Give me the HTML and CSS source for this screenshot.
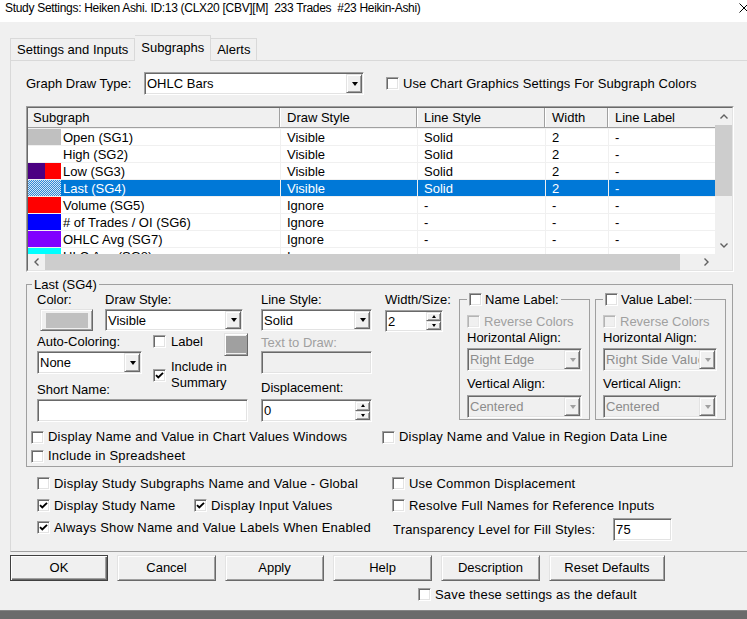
FILE: index.html
```html
<!DOCTYPE html>
<html lang="en">
<head>
    <meta charset="UTF-8">
    <title>Study Settings</title>
    <link rel="stylesheet" href="styles.css">
</head>
<body>
    <div class="titlebar">
        <span class="title">Study Settings: Heiken Ashi. ID:13 (CLX20 [CBV][M]&nbsp; 233 Trades&nbsp; #23 Heikin-Ashi)</span>
        <svg class="close" width="10" height="10" viewBox="0 0 10 10"><path d="M0.5 0.5L9.5 9.5M9.5 0.5L0.5 9.5" stroke="#000" stroke-width="1"/></svg>
    </div>

    <div class="tabs">
        <div class="tab first">Settings and Inputs</div>
        <div class="tab active">Subgraphs</div>
        <div class="tab">Alerts</div>
    </div>

    <div class="panel">
        <div class="draw-type">
            <span class="dt-label">Graph Draw Type:</span>
            <div class="field combo dt-combo"><span class="val">OHLC Bars</span><span class="raised drop"></span></div>
            <div class="check dt-check"><span class="box"></span>Use Chart Graphics Settings For Subgraph Colors</div>
        </div>

        <!-- subgraph list -->
        <div class="grid">
            <div class="grid-inner">
                <div class="grid-view">
                    <div class="row head">
                        <div class="cell">Subgraph</div>
                        <div class="cell">Draw Style</div>
                        <div class="cell">Line Style</div>
                        <div class="cell">Width</div>
                        <div class="cell">Line Label</div>
                    </div>
                    <div class="row">
                        <div class="cell name"><span class="sw sw-gray"></span>Open (SG1)</div>
                        <div class="cell">Visible</div><div class="cell">Solid</div><div class="cell">2</div><div class="cell">-</div>
                    </div>
                    <div class="row">
                        <div class="cell name"><span class="sw"></span>High (SG2)</div>
                        <div class="cell">Visible</div><div class="cell">Solid</div><div class="cell">2</div><div class="cell">-</div>
                    </div>
                    <div class="row">
                        <div class="cell name"><span class="sw sw-low"></span>Low (SG3)</div>
                        <div class="cell">Visible</div><div class="cell">Solid</div><div class="cell">2</div><div class="cell">-</div>
                    </div>
                    <div class="row selected">
                        <div class="cell name"><span class="sw sw-sel"></span>Last (SG4)</div>
                        <div class="cell">Visible</div><div class="cell">Solid</div><div class="cell">2</div><div class="cell">-</div>
                    </div>
                    <div class="row">
                        <div class="cell name"><span class="sw sw-red"></span>Volume (SG5)</div>
                        <div class="cell">Ignore</div><div class="cell">-</div><div class="cell">-</div><div class="cell">-</div>
                    </div>
                    <div class="row">
                        <div class="cell name"><span class="sw sw-blue"></span># of Trades / OI (SG6)</div>
                        <div class="cell">Ignore</div><div class="cell">-</div><div class="cell">-</div><div class="cell">-</div>
                    </div>
                    <div class="row">
                        <div class="cell name"><span class="sw sw-violet"></span>OHLC Avg (SG7)</div>
                        <div class="cell">Ignore</div><div class="cell">-</div><div class="cell">-</div><div class="cell">-</div>
                    </div>
                    <div class="row">
                        <div class="cell name"><span class="sw sw-cyan"></span>HLC Avg (SG8)</div>
                        <div class="cell">Ignore</div><div class="cell">-</div><div class="cell">-</div><div class="cell">-</div>
                    </div>
                </div>
                <div class="vscroll">
                    <span class="arrow"><svg width="8" height="5" viewBox="0 0 8 5"><path d="M0.5 4.5L4 1L7.5 4.5" fill="none" stroke="#606060" stroke-width="1.4"/></svg></span>
                    <span class="thumb"></span>
                    <span class="track"></span>
                    <span class="arrow"><svg width="8" height="5" viewBox="0 0 8 5"><path d="M0.5 0.5L4 4L7.5 0.5" fill="none" stroke="#606060" stroke-width="1.4"/></svg></span>
                </div>
                <div class="hscroll">
                    <span class="arrow"><svg width="5" height="8" viewBox="0 0 5 8"><path d="M4.5 0.5L1 4L4.5 7.5" fill="none" stroke="#606060" stroke-width="1.4"/></svg></span>
                    <span class="thumb"></span>
                    <span class="track"></span>
                    <span class="arrow"><svg width="5" height="8" viewBox="0 0 5 8"><path d="M0.5 0.5L4 4L0.5 7.5" fill="none" stroke="#606060" stroke-width="1.4"/></svg></span>
                </div>
                <div class="corner"></div>
            </div>
        </div>

        <!-- selected subgraph -->
        <fieldset class="group">
            <legend>Last (SG4)</legend>
            <div class="g-main">
                <div class="c-left">
                    <div class="lbl-row"><span class="l-color">Color:</span><span>Draw Style:</span></div>
                    <div class="ctl-row">
                        <div class="raised colorbtn"><span class="fill"></span></div>
                        <div class="field combo ds-combo"><span class="val">Visible</span><span class="raised drop"></span></div>
                    </div>
                    <div class="mid-row">
                        <div class="ac">
                            <div class="lbl">Auto-Coloring:</div>
                            <div class="field combo ac-combo"><span class="val">None</span><span class="raised drop"></span></div>
                            <div class="lbl short-lbl">Short Name:</div>
                        </div>
                        <div class="lbl-col">
                            <div class="check gap5"><span class="box"></span>Label</div>
                            <div class="check gap5 summary"><span class="box"><svg width="9" height="9" viewBox="0 0 9 9"><path d="M1 4.2L3.3 6.5L8 1.8" fill="none" stroke="#000" stroke-width="1.9"/></svg></span>Include in<br>Summary</div>
                        </div>
                        <div class="raised lblcolor"><span class="fill"></span></div>
                    </div>
                    <div class="field short-in"></div>
                </div>

                <div class="c-mid">
                    <div class="lbl">Line Style:</div>
                    <div class="field combo ls-combo"><span class="val">Solid</span><span class="raised drop"></span></div>
                    <div class="lbl dis td-lbl">Text to Draw:</div>
                    <div class="field off td-in"></div>
                    <div class="lbl disp-lbl">Displacement:</div>
                    <div class="field spin disp-in"><span class="val">0</span><span class="spin-btns"><span class="raised up"></span><span class="raised down"></span></span></div>
                </div>

                <div class="c-width">
                    <div class="lbl">Width/Size:</div>
                    <div class="field spin w-in"><span class="val">2</span><span class="spin-btns"><span class="raised up"></span><span class="raised down"></span></span></div>
                </div>

                <fieldset class="sub name-grp">
                    <legend><span class="check gap3"><span class="box"></span>Name Label:</span></legend>
                    <div class="check dis rev"><span class="box off"></span>Reverse Colors</div>
                    <div class="lbl h-lbl">Horizontal Align:</div>
                    <div class="field combo off h-combo"><span class="val">Right Edge</span><span class="raised drop"></span></div>
                    <div class="lbl v-lbl">Vertical Align:</div>
                    <div class="field combo off v-combo"><span class="val">Centered</span><span class="raised drop"></span></div>
                </fieldset>

                <fieldset class="sub value-grp">
                    <legend><span class="check gap3"><span class="box"></span>Value Label:</span></legend>
                    <div class="check dis rev"><span class="box off"></span>Reverse Colors</div>
                    <div class="lbl h-lbl">Horizontal Align:</div>
                    <div class="field combo off h-combo"><span class="val">Right Side Value</span><span class="raised drop"></span></div>
                    <div class="lbl v-lbl">Vertical Align:</div>
                    <div class="field combo off v-combo"><span class="val">Centered</span><span class="raised drop"></span></div>
                </fieldset>
            </div>

            <div class="g-row first-row">
                <div class="check chart-vals"><span class="box"></span>Display Name and Value in Chart Values Windows</div>
                <div class="check"><span class="box"></span>Display Name and Value in Region Data Line</div>
            </div>
            <div class="g-row">
                <div class="check"><span class="box"></span>Include in Spreadsheet</div>
            </div>
        </fieldset>

        <!-- global options -->
        <div class="opts">
            <div class="check"><span class="box"></span>Display Study Subgraphs Name and Value - Global</div>
            <div class="check"><span class="box"></span>Use Common Displacement</div>
            <div class="pair">
                <div class="check study-name"><span class="box"><svg width="9" height="9" viewBox="0 0 9 9"><path d="M1 4.2L3.3 6.5L8 1.8" fill="none" stroke="#000" stroke-width="1.9"/></svg></span>Display Study Name</div>
                <div class="check"><span class="box"><svg width="9" height="9" viewBox="0 0 9 9"><path d="M1 4.2L3.3 6.5L8 1.8" fill="none" stroke="#000" stroke-width="1.9"/></svg></span>Display Input Values</div>
            </div>
            <div class="check"><span class="box"></span>Resolve Full Names for Reference Inputs</div>
            <div class="check"><span class="box"><svg width="9" height="9" viewBox="0 0 9 9"><path d="M1 4.2L3.3 6.5L8 1.8" fill="none" stroke="#000" stroke-width="1.9"/></svg></span>Always Show Name and Value Labels When Enabled</div>
            <div class="transp">
                <span class="tr-lbl">Transparency Level for Fill Styles:</span>
                <div class="field tr-in"><span class="val">75</span></div>
            </div>
        </div>
    </div>

    <div class="buttons">
        <div class="btn default">OK</div>
        <div class="btn">Cancel</div>
        <div class="btn">Apply</div>
        <div class="btn">Help</div>
        <div class="btn">Description</div>
        <div class="btn wide">Reset Defaults</div>
    </div>

    <div class="save-row">
        <div class="check"><span class="box"></span>Save these settings as the default</div>
    </div>

    <div class="strip"></div>
</body>
</html>
```

FILE: styles.css
```css
* {
    box-sizing: border-box;
}

body {
    margin: 0;
    width: 747px;
    height: 619px;
    overflow: hidden;
    background: #f0f0f0;
    font-family: "Liberation Sans", Arial, sans-serif;
    font-size: 13px;
    line-height: 15px;
    color: #000;
    display: flex;
    flex-direction: column;
}

/* title bar */
.titlebar {
    height: 22px;
    flex-shrink: 0;
    background: #fff;
    display: flex;
    justify-content: space-between;
    padding-left: 5px;
    font-size: 12px;
    line-height: 16px;
    letter-spacing: -0.3px;
    overflow: hidden;
}

.close {
    margin-top: 3px;
    margin-right: -2px;
}

/* tabs */
.tabs {
    display: flex;
    align-items: flex-end;
    height: 25px;
    margin-top: 13px;
    padding-left: 10px;
    flex-shrink: 0;
}

.tab {
    height: 22px;
    padding: 0 6px;
    line-height: 21px;
    border-top: 1px solid #d9d9d9;
    border-right: 1px solid #d9d9d9;
    white-space: nowrap;
}

.tab.first {
    border-left: 1px solid #d9d9d9;
}

.tab.active {
    height: 26px;
    line-height: 23px;
    margin-bottom: -1px;
    background: #f0f0f0;
    position: relative;
    z-index: 1;
}

.panel {
    margin-left: 10px;
    margin-right: -10px;
    height: 492px;
    flex-shrink: 0;
    border: 1px solid #d9d9d9;
    border-bottom-color: #a0a0a0;
    padding: 11px 0 0 15px;
}

/* classic controls */
.field {
    background: #fff;
    border: 1px solid;
    border-color: #a0a0a0 #fff #fff #a0a0a0;
    padding: 1px;
    box-shadow: inset 1px 1px #696969, inset -1px -1px #e3e3e3;
}

.field.off {
    background: #f0f0f0;
    color: #8c8c8c;
}

.raised {
    background: #f0f0f0;
    border: 1px solid;
    border-color: #e3e3e3 #696969 #696969 #e3e3e3;
    box-shadow: inset 1px 1px #fff, inset -1px -1px #a0a0a0;
}

.combo, .spin {
    display: flex;
}

.combo .val, .spin .val, .tr-in .val {
    flex: 1;
    min-width: 0;
    padding-left: 1px;
    align-self: center;
    white-space: nowrap;
    overflow: hidden;
}

.drop {
    width: 16px;
    flex-shrink: 0;
    display: flex;
    align-items: center;
    justify-content: center;
}

.drop::after {
    content: "";
    border-top: 4px solid #000;
    border-left: 3.5px solid transparent;
    border-right: 3.5px solid transparent;
    margin-left: 1px;
}

.off .drop::after {
    border-top-color: #a0a0a0;
}

.spin-btns {
    width: 15px;
    display: flex;
    flex-direction: column;
}

.spin-btns .raised {
    flex: 1;
    display: flex;
    align-items: center;
    justify-content: center;
}

.spin-btns .up::after {
    content: "";
    border-bottom: 3px solid #000;
    border-left: 2.5px solid transparent;
    border-right: 2.5px solid transparent;
}

.spin-btns .down::after {
    content: "";
    border-top: 3px solid #000;
    border-left: 2.5px solid transparent;
    border-right: 2.5px solid transparent;
}

.check {
    display: flex;
    align-items: center;
    gap: 4px;
    white-space: nowrap;
}

.check.gap5 {
    gap: 5px;
}

.check.gap3 {
    gap: 3px;
}

.box {
    width: 13px;
    height: 13px;
    flex-shrink: 0;
    background: #fff;
    border: 1px solid;
    border-color: #a0a0a0 #fff #fff #a0a0a0;
    box-shadow: inset 1px 1px #696969, inset -1px -1px #e3e3e3;
    display: flex;
    align-items: center;
    justify-content: center;
}

.box.off {
    background: #f0f0f0;
    border-color: #c8c8c8 #fff #fff #c8c8c8;
    box-shadow: inset 1px 1px #b4b4b4, inset -1px -1px #e8e8e8;
}

.dis {
    color: #a0a0a0;
}

/* graph draw type */
.draw-type {
    display: flex;
    align-items: center;
    height: 23px;
}

.dt-label {
    width: 118px;
}

.dt-combo {
    width: 220px;
    height: 23px;
}

.dt-check {
    margin-left: 22px;
    letter-spacing: 0.1px;
}

/* subgraph list */
.grid {
    margin-top: 11px;
    width: 708px;
    height: 166px;
    border: 1px solid;
    border-color: #a0a0a0 #fff #fff #a0a0a0;
}

.grid-inner {
    height: 100%;
    border: 1px solid;
    border-color: #696969 #e3e3e3 #e3e3e3 #696969;
    display: grid;
    grid-template-columns: 1fr 17px;
    grid-template-rows: 146px 1fr;
}

.grid-view {
    overflow: hidden;
    background: #fff;
}

.row {
    display: grid;
    grid-template-columns: 252px 137px 128px 63px 120px;
    height: 17px;
    border-top: 1px solid #f0f0f0;
    line-height: 17px;
    white-space: nowrap;
}

.row .cell {
    padding-left: 6px;
    border-left: 1px solid #f0f0f0;
    overflow: hidden;
}

.row .cell.name {
    padding-left: 0;
    border-left: none;
    display: flex;
}

.row.head {
    height: 20px;
    border-top: none;
    border-bottom: 1px solid #a0a0a0;
    background: #f0f0f0;
    line-height: 20px;
}

.row.head .cell {
    padding-left: 6px;
    border-left: 1px solid #fff;
    border-right: 1px solid #a0a0a0;
}

.row.head .cell:first-child {
    padding-left: 5px;
    border-left: none;
}

.row.selected {
    background: #0078d7;
    color: #fff;
}

.sw {
    width: 33px;
    height: 16px;
    margin-right: 2px;
    flex-shrink: 0;
    background: #fff;
}

.sw-gray {
    background: #c0c0c0;
}

.sw-low {
    background: linear-gradient(90deg, #4b0082 0 17px, #ff0000 17px);
}

.sw-sel {
    background: repeating-conic-gradient(#2f88d8 0 25%, #d6e6f3 0 50%) 0 0 / 2px 2px;
}

.sw-red {
    background: #ff0000;
}

.sw-blue {
    background: #0000ff;
}

.sw-violet {
    background: #8000ff;
}

.sw-cyan {
    background: #00ffff;
}

.vscroll {
    display: flex;
    flex-direction: column;
    background: #f0f0f0;
}

.vscroll .arrow {
    height: 17px;
    display: flex;
    align-items: center;
    justify-content: center;
}

.vscroll .thumb {
    height: 71px;
    background: #cdcdcd;
}

.vscroll .track, .hscroll .track {
    flex: 1;
}

.hscroll {
    display: flex;
    background: #f0f0f0;
}

.hscroll .arrow {
    width: 17px;
    display: flex;
    align-items: center;
    justify-content: center;
}

.hscroll .thumb {
    width: 635px;
    background: #cdcdcd;
}

.corner {
    background: #f0f0f0;
}

/* selected subgraph group */
fieldset {
    margin: 0;
    min-width: 0;
    border: 1px solid #a0a0a0;
}

.group {
    width: 707px;
    margin-top: 5px;
    padding: 0 4px 2px 4px;
}

.group > legend {
    margin-top: 5px;
    margin-left: 1px;
    padding: 0 2px;
    line-height: 15px;
}

.g-main {
    display: flex;
    align-items: flex-start;
    margin-left: 6px;
}

.lbl {
    white-space: nowrap;
}

.c-left {
    width: 211px;
    flex-shrink: 0;
}

.lbl-row {
    display: flex;
}

.l-color {
    width: 68px;
}

.ctl-row {
    display: flex;
    margin-top: 2px;
}

.colorbtn {
    margin-left: 3px;
    width: 53px;
    height: 22px;
    padding: 3px 4px 2px 5px;
}

.fill {
    display: block;
    height: 100%;
    background: #c0c0c0;
}

.ds-combo {
    margin-left: 12px;
    width: 138px;
    height: 22px;
}

.mid-row {
    display: flex;
    margin-top: 3px;
}

.ac {
    width: 105px;
}

.ac-combo {
    margin-top: 2px;
    height: 23px;
}

.short-lbl {
    margin-top: 8px;
}

.lbl-col {
    margin-left: 11px;
    width: 71px;
}

.summary {
    margin-top: 10px;
    line-height: 16px;
}

.lblcolor {
    margin-top: -1px;
    width: 24px;
    height: 23px;
    padding: 2px 1px;
}

.lblcolor .fill {
    background: #a0a0a0;
}

.short-in {
    margin-top: 2px;
    height: 23px;
}

.c-mid {
    width: 111px;
    margin-left: 13px;
    flex-shrink: 0;
}

.ls-combo {
    margin-top: 2px;
    height: 22px;
}

.td-lbl {
    margin-top: 4px;
}

.td-in {
    margin-top: 1px;
    height: 23px;
}

.disp-lbl {
    margin-top: 6px;
}

.disp-in {
    margin-top: 4px;
    height: 23px;
}

.c-width {
    width: 58px;
    margin-left: 13px;
    flex-shrink: 0;
}

.w-in {
    margin-top: 3px;
    height: 22px;
}

.sub {
    width: 131px;
    flex-shrink: 0;
    padding: 0 0 1px 7px;
}

.sub > legend {
    padding: 0 2px;
    line-height: 15px;
}

.name-grp {
    margin-left: 16px;
}

.value-grp {
    margin-left: 5px;
}

.rev {
    margin-top: 7px;
}

.h-lbl {
    margin-top: 1px;
}

.h-combo, .v-combo {
    width: 115px;
    height: 23px;
    margin-top: 3px;
}

.value-grp .h-combo, .value-grp .v-combo {
    width: 114px;
}

.value-grp .h-combo .val {
    letter-spacing: 0.2px;
}

.v-lbl {
    margin-top: 5px;
}

.v-combo {
    margin-top: 4px;
}

.g-row {
    display: flex;
    margin-top: 3px;
    line-height: 16px;
    letter-spacing: 0.2px;
}

.g-row.first-row {
    margin-top: 7px;
}

.chart-vals {
    width: 351px;
}

/* global options */
.opts {
    margin-top: 5px;
    margin-left: 11px;
    display: grid;
    grid-template-columns: 355px 1fr;
    grid-auto-rows: 22px;
    align-items: center;
    letter-spacing: 0.2px;
}

.pair {
    display: flex;
}

.study-name {
    width: 157px;
}

.transp {
    display: flex;
    align-items: center;
    margin-top: 5px;
}

.tr-lbl {
    width: 221px;
    padding-left: 1px;
}

.tr-in {
    width: 59px;
    height: 23px;
    display: flex;
}

/* dialog buttons */
.buttons {
    display: flex;
    gap: 9px;
    margin-top: 3px;
    padding-left: 10px;
    flex-shrink: 0;
}

.btn {
    width: 99px;
    height: 26px;
    line-height: 24px;
    text-align: center;
    background: #f0f0f0;
    border: 1px solid;
    border-color: #e3e3e3 #696969 #696969 #e3e3e3;
    box-shadow: inset 1px 1px #fff, inset -1px -1px #a0a0a0;
}

.btn.default {
    width: 98px;
    border-color: #404040;
    box-shadow: inset 1px 1px #fff, inset -1px -1px #696969, inset -2px -2px #a0a0a0;
}

.btn.wide {
    width: 116px;
}

.save-row {
    margin-top: 6px;
    padding-left: 418px;
    flex-shrink: 0;
    letter-spacing: 0.2px;
}

.strip {
    margin-top: auto;
    height: 9px;
    flex-shrink: 0;
    background: #6b6b6b;
    border-top: 1px solid #858585;
}
```
